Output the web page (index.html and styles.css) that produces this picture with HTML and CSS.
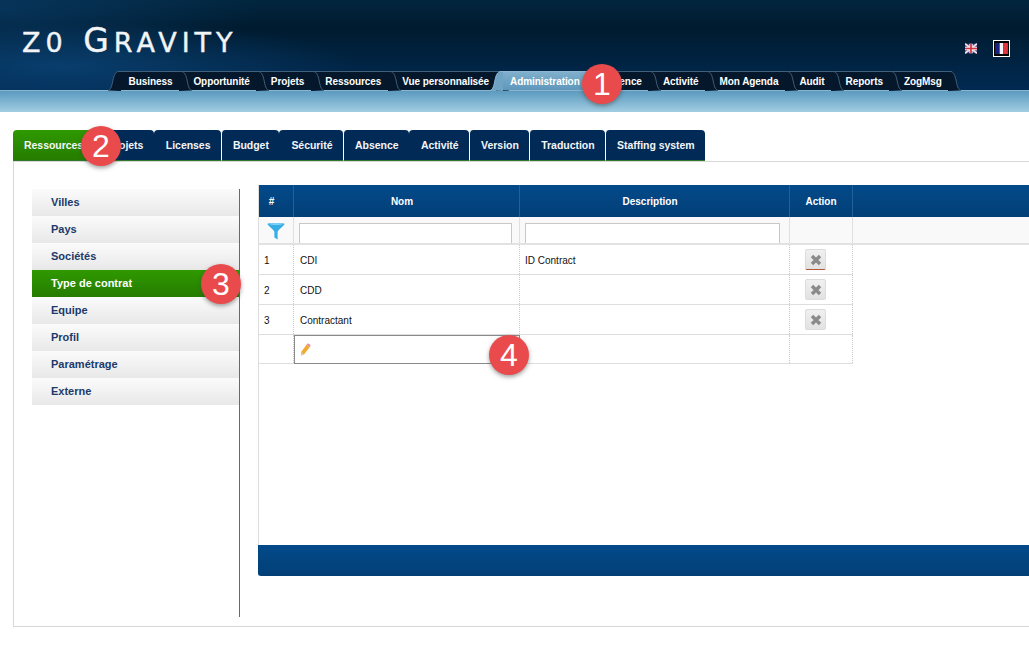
FILE: index.html
```html
<!DOCTYPE html>
<html lang="en">

<head>
    <meta charset="UTF-8">
    <title>z0 Gravity</title>
    <link rel="stylesheet" href="styles.css">
</head>

<body>
    <header id="top">
        <div id="brandRow">
            <div id="logo"><span class="logoSmall">z0</span> G<span class="logoSmall">ravity</span></div>
            <div id="flags">
                <svg width="12" height="11" viewBox="0 0 14 11">
                    <rect width="14" height="11" fill="#3d3f86" />
                    <path d="M0 0L14 11M14 0L0 11" stroke="#f1d9e2" stroke-width="2.4" />
                    <path d="M7 0V11M0 5.500H14" stroke="#f3e6ea" stroke-width="4" />
                    <path d="M7 0V11M0 5.500H14" stroke="#d3343f" stroke-width="2" />
                </svg>
                <span id="flagFr">
                    <svg width="13" height="11" viewBox="0 0 14 12">
                        <rect width="5" height="12" fill="#1b1f7d" />
                        <rect x="5" width="4" height="12" fill="#f4f4f8" />
                        <rect x="9" width="5" height="12" fill="#e0353f" />
                    </svg>
                </span>
            </div>
        </div>
        <nav id="mainTabs">
            <a class="mainTab">Business</a>
            <a class="mainTab">Opportunité</a>
            <a class="mainTab">Projets</a>
            <a class="mainTab">Ressources</a>
            <a class="mainTab">Vue personnalisée</a>
            <a class="mainTab active">Administration</a>
            <a class="mainTab">Absence</a>
            <a class="mainTab">Activité</a>
            <a class="mainTab">Mon Agenda</a>
            <a class="mainTab">Audit</a>
            <a class="mainTab">Reports</a>
            <a class="mainTab">ZogMsg</a>
        </nav>
    </header>
    <div id="band"></div>

    <nav id="subTabs">
        <a class="subTab active">Ressources</a>
        <a class="subTab joined">Projets</a>
        <a class="subTab joined">Licenses</a>
        <a class="subTab">Budget</a>
        <a class="subTab joined">Sécurité</a>
        <a class="subTab">Absence</a>
        <a class="subTab joined">Activité</a>
        <a class="subTab">Version</a>
        <a class="subTab">Traduction</a>
        <a class="subTab">Staffing system</a>
    </nav>

    <main id="content">
        <ul id="sideMenu">
            <li>Villes</li>
            <li>Pays</li>
            <li>Sociétés</li>
            <li class="active">Type de contrat</li>
            <li>Equipe</li>
            <li>Profil</li>
            <li>Paramétrage</li>
            <li>Externe</li>
        </ul>

        <section id="panel">
            <table id="grid">
                <thead>
                    <tr>
                        <th class="colId">#</th>
                        <th class="colName">Nom</th>
                        <th class="colDesc">Description</th>
                        <th class="colAction">Action</th>
                        <th></th>
                    </tr>
                    <tr class="filterRow">
                        <td>
                            <svg class="funnel" width="18" height="18" viewBox="0 0 18 18">
                                <path d="M0.500 2C0.500 0.800 17.500 0.800 17.500 2C17.500 3.500 11 7.500 10.600 10V17.500L7.400 15.500V10C7 7.500 0.500 3.500 0.500 2Z" fill="#35ade6" />
                                <ellipse cx="9" cy="2" rx="7" ry="0.800" fill="#9adcf7" />
                            </svg>
                        </td>
                        <td><input class="filterInput" type="text"></td>
                        <td><input class="filterInput descInput" type="text"></td>
                        <td></td>
                        <td></td>
                    </tr>
                </thead>
                <tbody>
                    <tr>
                        <td>1</td>
                        <td>CDI</td>
                        <td>ID Contract</td>
                        <td><button class="deleteButton underlined"><svg width="12" height="12" viewBox="0 0 12 12"><path d="M2 2L10 10M10 2L2 10" stroke="#8a8a8a" stroke-width="3.400" /></svg></button></td>
                        <td class="blank"></td>
                    </tr>
                    <tr>
                        <td>2</td>
                        <td>CDD</td>
                        <td></td>
                        <td><button class="deleteButton"><svg width="12" height="12" viewBox="0 0 12 12"><path d="M2 2L10 10M10 2L2 10" stroke="#8a8a8a" stroke-width="3.400" /></svg></button></td>
                        <td class="blank"></td>
                    </tr>
                    <tr>
                        <td>3</td>
                        <td>Contractant</td>
                        <td></td>
                        <td><button class="deleteButton"><svg width="12" height="12" viewBox="0 0 12 12"><path d="M2 2L10 10M10 2L2 10" stroke="#8a8a8a" stroke-width="3.400" /></svg></button></td>
                        <td class="blank"></td>
                    </tr>
                    <tr class="newRow">
                        <td></td>
                        <td class="editCell">
                            <svg class="pencil" width="11" height="13" viewBox="0 0 11 13">
                                <path d="M6.500 1.800L9.800 4L4.200 11.200L1 12.500L1.200 9Z" fill="#f2ab2f" />
                                <path d="M6.500 1.800L7.500 0.500C8.200 0 10.800 1.600 10.600 2.800L9.800 4Z" fill="#e58ab0" />
                                <path d="M1.200 9L4.200 11.200L1 12.500Z" fill="#d9c7a8" />
                            </svg>
                        </td>
                        <td></td>
                        <td></td>
                        <td class="blank"></td>
                    </tr>
                </tbody>
            </table>
            <div id="gridFooter"></div>
        </section>
    </main>

    <span class="badge" id="badge1">1</span>
    <span class="badge" id="badge2">2</span>
    <span class="badge" id="badge3">3</span>
    <span class="badge" id="badge4">4</span>
</body>

</html>
```

FILE: styles.css
```css
body {
    margin: 0;
    height: 667px;
    position: relative;
    overflow: hidden;
    background-color: #ffffff;
    font-family: "Liberation Sans", Arial, sans-serif;
    font-size: 10px;
    color: #111;
}

/* Header */
#top {
    height: 90px;
    display: flex;
    flex-direction: column;
    background:
        radial-gradient(ellipse 300px 45px at 60px 66px, #0d4a80aa, transparent),
        radial-gradient(ellipse 260px 60px at 0 10px, #0a3f6e99, transparent),
        linear-gradient(#02263f, #001b2f 30%, #012a52);
}

#brandRow {
    flex: 1;
    display: flex;
    justify-content: space-between;
    align-items: flex-start;
}

#logo {
    margin: 22px 0 0 22px;
    font-family: "DejaVu Sans", sans-serif;
    font-size: 33px;
    line-height: 38px;
    letter-spacing: 5px;
    color: #f2f4f6;
    -webkit-text-stroke: 0.400px #f2f4f6;
}

.logoSmall {
    font-size: 27px;
    text-transform: uppercase;
}

#flags {
    display: flex;
    align-items: center;
    gap: 16px;
    margin: 40px 19px 0 0;
}

#flags svg {
    display: block;
}

#flagFr {
    border: 1px solid #ffffff;
    padding: 2px 1px;
    background-color: #000;
}

#mainTabs {
    display: flex;
    padding-left: 118px;
    height: 19px;
}

.mainTab {
    position: relative;
    padding: 0 10.500px;
    font-weight: bold;
    font-size: 10px;
    letter-spacing: -0.070px;
    line-height: 20px;
    color: #ffffff;
    background-color: #04172b;
    border-top: 1px solid #43607a;
    box-sizing: border-box;
}

/* the right curve of a tab lies over the next tab */
.mainTab::after {
    content: "";
    position: absolute;
    top: -1px;
    right: -9px;
    width: 13px;
    height: 20px;
    z-index: 3;
    background: url("data:image/svg+xml,%3Csvg xmlns='http://www.w3.org/2000/svg' width='13' height='20'%3E%3Cpath d='M0 0.500H2C6 0.500 7 5 8 9C9 14 10 19 13 19.500L0 20Z' fill='%2304172b'/%3E%3Cpath d='M0 0.500H2C6 0.500 7 5 8 9C9 14 10 19 13 19.500' fill='none' stroke='%2343607a'/%3E%3C/svg%3E");
}

.mainTab:first-child {
    z-index: 1;
}

.mainTab:first-child::before,
.mainTab.active::before {
    content: "";
    position: absolute;
    top: -1px;
    left: -10px;
    width: 13px;
    height: 20px;
    z-index: -1;
    background: url("data:image/svg+xml,%3Csvg xmlns='http://www.w3.org/2000/svg' width='13' height='20'%3E%3Cpath d='M13 0.500H11C7 0.500 6 5 5 9C4 14 3 19 0 19.500L13 20Z' fill='%2304172b'/%3E%3Cpath d='M13 0.500H11C7 0.500 6 5 5 9C4 14 3 19 0 19.500' fill='none' stroke='%2343607a'/%3E%3C/svg%3E");
}

.mainTab.active {
    z-index: 4;
    background: linear-gradient(#7fafcb, #5f97bb);
    border-color: #8db7d0;
}

.mainTab.active::before {
    background: url("data:image/svg+xml,%3Csvg xmlns='http://www.w3.org/2000/svg' width='13' height='20'%3E%3Cpath d='M13 0.500H11C7 0.500 6 5 5 9C4 14 3 19 0 19.500L13 20Z' fill='%236fa3c4'/%3E%3Cpath d='M13 0.500H11C7 0.500 6 5 5 9C4 14 3 19 0 19.500' fill='none' stroke='%238db7d0'/%3E%3C/svg%3E");
}

.mainTab.active::after {
    background: url("data:image/svg+xml,%3Csvg xmlns='http://www.w3.org/2000/svg' width='13' height='20'%3E%3Cpath d='M0 0.500H2C6 0.500 7 5 8 9C9 14 10 19 13 19.500L0 20Z' fill='%236fa3c4'/%3E%3C/svg%3E");
}

#band {
    height: 22px;
    background: linear-gradient(#5b9abf, #a2cde2);
    border-top: 1px solid #88b6d0;
    box-sizing: border-box;
}

/* Second level tabs */
#subTabs {
    display: flex;
    margin: 18px 0 0 13px;
    height: 31px;
}

.subTab {
    padding: 0 10.500px 0 11px;
    font-weight: bold;
    font-size: 10.500px;
    letter-spacing: -0.040px;
    line-height: 30px;
    color: #f4f6f8;
    background-color: #012a57;
    border-left: 1px solid #ffffff;
    border-radius: 4px 4px 0 0;
    border-bottom: 1px solid #2f7a2a;
    box-sizing: border-box;
}

.subTab.joined {
    border-left: none;
    padding-left: 12px;
}

.subTab.active {
    background: linear-gradient(#2f9900, #267c00);
    border-left: none;
    width: 83px;
}

/* Content frame */
#content {
    display: flex;
    align-items: flex-start;
    gap: 18px;
    box-sizing: border-box;
    height: 466px;
    margin-left: 13px;
    padding: 23px 0 0 18px;
    border-top: 1px solid #d8d8d8;
    border-bottom: 1px solid #d8d8d8;
    border-left: 1px solid #d8d8d8;
}

#sideMenu {
    flex: none;
    list-style: none;
    width: 208px;
    height: 428px;
    box-sizing: border-box;
    margin: 4px 0 0 0;
    padding: 0;
    border-right: 1px solid #3c8f1e;
}

#sideMenu li {
    height: 27px;
    padding-left: 19px;
    font-weight: bold;
    font-size: 11px;
    line-height: 26px;
    color: #1c3a6a;
    background: linear-gradient(#fbfbfb, #e8e8e8);
}

#sideMenu li.active {
    color: #ffffff;
    background: linear-gradient(#2f9900, #267c00);
}

/* Grid */
#panel {
    flex: none;
    width: 790px;
    height: 391px;
    display: flex;
    flex-direction: column;
    justify-content: space-between;
    border-left: 1px solid #dddddd;
    box-sizing: border-box;
}

#grid {
    width: 100%;
    table-layout: fixed;
    border-collapse: collapse;
}

#grid th {
    height: 32px;
    padding: 0;
    font-size: 10px;
    color: #ffffff;
    background: linear-gradient(#034a8a, #023f76);
    border-left: 1px solid #23609a;
}

#grid th:first-child {
    border-left: none;
}

#grid th.colId,
#grid th.colName,
#grid th.colDesc {
    padding-right: 9px;
}

.colId {
    width: 25px;
}

.colName {
    width: 216px;
}

.colDesc {
    width: 260px;
}

.colAction {
    width: 62px;
}

.filterRow td {
    height: 26px;
    padding: 0;
    background-color: #f9f9f9;
    border-left: 1px solid #e0e0e0;
    border-bottom: 2px solid #e2e2e2;
    vertical-align: bottom;
}

.filterRow td:first-child {
    border-left: none;
    text-align: center;
    vertical-align: middle;
}

.funnel {
    display: block;
    margin: 2px auto 0;
}

.filterInput {
    display: block;
    width: calc(100% - 12px);
    height: 20px;
    box-sizing: border-box;
    margin-left: 5px;
    border: 1px solid #c8c8c8;
    border-bottom: none;
    background-color: #ffffff;
}

.descInput {
    width: calc(100% - 14px);
}

#grid tbody td {
    height: 28px;
    padding: 1px 5px 0;
    border-left: 1px dotted #c8c8c8;
    border-bottom: 1px solid #dedede;
    font-size: 10px;
}

#grid tbody td:first-child {
    border-left: none;
}

#grid tbody td:nth-child(2) {
    padding-left: 6px;
}

#grid tbody td.blank {
    border-bottom: none;
}

#grid tbody tr:last-child td {
    height: 27px;
}

#grid tbody td.editCell {
    outline: 1px solid #8a8a8a;
    outline-offset: -1px;
    vertical-align: middle;
}

.pencil {
    display: block;
}

.deleteButton {
    display: block;
    width: 21px;
    height: 21px;
    margin: -1px 0 0 10px;
    padding: 0;
    border: 1px solid #dcdcdc;
    border-radius: 2px;
    background: linear-gradient(#f0f0f0, #e2e2e2);
}

.deleteButton svg {
    display: block;
    margin: auto;
}

.deleteButton.underlined {
    border-bottom: 1px solid #b0583c;
}

#gridFooter {
    height: 31px;
    border-bottom-left-radius: 3px;
    background: linear-gradient(#034a8a, #023f76);
    margin-left: -1px;
}

/* Numbered callouts */
.badge {
    position: absolute;
    width: 40px;
    height: 40px;
    border-radius: 50%;
    background-color: #e94b4c;
    box-shadow: 0 2px 4px #3f3f3f80;
    color: #ffffff;
    font-family: "Liberation Sans", sans-serif;
    font-size: 32px;
    line-height: 40px;
    text-align: center;
    z-index: 5;
}

#badge1 {
    left: 582px;
    top: 64px;
}

#badge2 {
    left: 81px;
    top: 126px;
}

#badge3 {
    left: 201px;
    top: 264px;
}

#badge4 {
    left: 489px;
    top: 335px;
}
```
